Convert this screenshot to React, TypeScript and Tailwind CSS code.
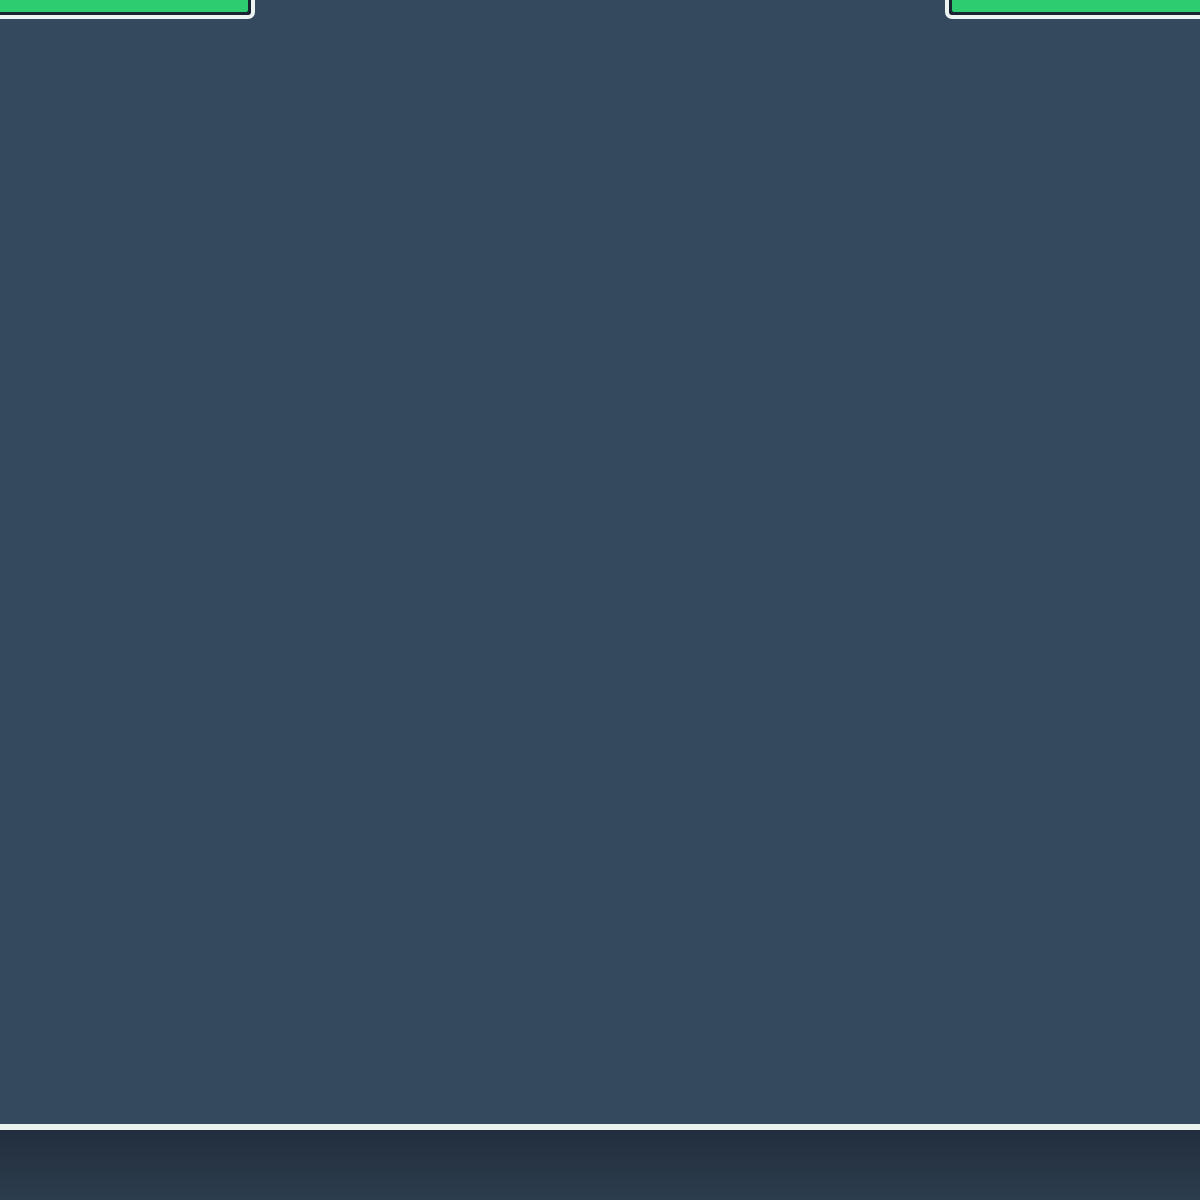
export default function App() {
  return (
    <div className="w-[1200px] h-[1200px] flex flex-col overflow-hidden font-['Liberation_Sans',sans-serif]">
      <main className="flex-1 bg-[#34495e]">
        <div className="flex justify-between items-start">
          <div className="w-[265px] h-[40px] -ml-[10px] -mt-[21px] border-4 border-[#ecf3f1] rounded-[7px] bg-[#1a2430]">
            <div className="w-full h-full border-[3px] border-[#1a2430] rounded-[5px] bg-[#2ecc71]" />
          </div>
          <div className="w-[265px] h-[40px] -mr-[10px] -mt-[21px] border-4 border-[#ecf3f1] rounded-[7px] bg-[#1a2430]">
            <div className="w-full h-full border-[3px] border-[#1a2430] rounded-[5px] bg-[#2ecc71]" />
          </div>
        </div>
      </main>
      <footer className="h-[76px] border-t-[6px] border-[#e8f3ef] bg-gradient-to-b from-[#222e3d] to-[#2c3d4d]" />
    </div>
  );
}
